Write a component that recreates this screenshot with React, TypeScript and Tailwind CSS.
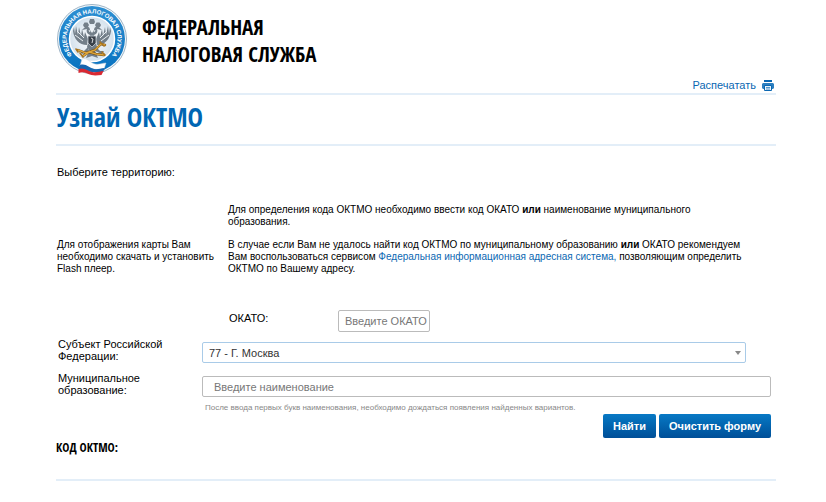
import { useState } from 'react';

const regions = [
  { code: '77', name: 'Г. Москва' },
  { code: '78', name: 'Г. Санкт-Петербург' },
  { code: '50', name: 'Московская область' },
];

const Emblem = () => (
  <svg viewBox="0 0 72 76" className="h-[76px] w-[72px] shrink-0" role="img" aria-label="ФНС">
    <defs>
      <linearGradient id="ring" x1="0" y1="0" x2="0" y2="1">
        <stop offset="0" stopColor="#2d8fd2" />
        <stop offset="1" stopColor="#0872c0" />
      </linearGradient>
      <radialGradient id="field">
        <stop offset="0" stopColor="#ffffff" />
        <stop offset="1" stopColor="#d3e1ec" />
      </radialGradient>
      <path id="arc" d="M19.600 56.500 A25.500 25.500 0 1 1 52.400 56.500" />
    </defs>
    <circle cx="36" cy="37" r="34.5" fill="#f4f8fb" stroke="#9db4c6" strokeWidth="1" />
    <circle cx="36" cy="37" r="33" fill="url(#ring)" />
    <circle cx="36" cy="37" r="22.5" fill="url(#field)" stroke="#ffffff" strokeWidth="1.5" />
    <text fontFamily="Liberation Sans, sans-serif" fontSize="6" fontWeight="700" fill="#ffffff">
      <textPath href="#arc" startOffset="50%" textAnchor="middle">ФЕДЕРАЛЬНАЯ НАЛОГОВАЯ СЛУЖБА</textPath>
    </text>
    {/* eagle */}
    <g fill="#737f89">
      <path d="M33 20l1-3h4l1 3-1 2h-4z" />
      <path d="M27 23l1.500-2.500h3L33 23l-1 2h-4zM39 23l1.500-2.500h3L45 23l-1 2h-4z" />
      <path d="M34 33c-3-1-4-4-3-6l-5 1 3-3c3-1 5 0 5 3l2 3 2-3c0-3 2-4 5-3l3 3-5-1c1 2 0 5-3 6l3 12-5 7-5-7z" />
      <path d="M31 43c-8 0-13-6-14-14l1-4 1 7 1-8 2 9 1-8 2 9 1-7 2 8 1-5 3 7z" />
      <path d="M41 43c8 0 13-6 14-14l-1-4-1 7-1-8-2 9-1-8-2 9-1-7-2 8-1-5-3 7z" />
      <path d="M32 45l-4 4-4 0 2 3 7-3zM40 45l4 4 4 0-2 3-7-3zM33 49l-3 7 6-2 6 2-3-7z" />
    </g>
    <path d="M19 33l8 6M21 29l7 7M53 33l-8 6M51 29l-7 7M33 28l1 2M39 28l-1 2" stroke="#e8eef2" strokeWidth="1" />
    <path d="M32 34h8v7l-4 4-4-4z" fill="#39414a" stroke="#c3ccd4" strokeWidth="0.8" />
    <path d="M35 36l2 1-1 4" fill="none" stroke="#ffffff" strokeWidth="0.8" />
    {/* caduceus and torch */}
    <g fill="none" strokeLinecap="round">
      <path d="M22 48l8 3 9-3 6-6 4 1M27 54l6-4 7 2 8 1" stroke="#68450f" strokeWidth="2.4" />
      <path d="M22 48l8 3 9-3 6-6 4 1M27 54l6-4 7 2 8 1" stroke="#dda53a" strokeWidth="1.6" />
      <path d="M20 47l2 3M24 51l3 4M44 40l4 4M46 50l3 3" stroke="#a87521" strokeWidth="1.6" />
    </g>
    {/* ribbon */}
    <path d="M26 57c5-2 8 4 13 5 4 1 7-1 11-1l-2 6c-4 0-6 1-10 0-5-1-8-5-14-3z" fill="#ffffff" stroke="#c8d3dc" strokeWidth="0.5" />
    <path d="M24 63c6-2 9 3 14 4 4 1 6-1 11-1l-2 4c-3 0-6 1-10 0-5-1-8-5-14-3z" fill="#1765ae" />
    <path d="M22.500 67c6-2 9 2 14 3 4 1 7-1 11-1l-2 4c-3 0-6 1-10 0-5-1-7-4-13-2z" fill="#d92932" />
  </svg>
);

const PrintIcon = () => (
  <svg viewBox="0 0 12 11" className="h-[11px] w-3" aria-hidden="true">
    <path d="M2 0h8v2H2z" fill="#0a67b2" />
    <path d="M1 3h10l1 1v4l-1 1H1L0 8V4z" fill="#2c7fc0" />
    <path d="M2.500 5.500h7v5h-7z" fill="#e9f3fa" stroke="#0a67b2" />
    <path d="M4 7.500h4M4 9h4" stroke="#2c7fc0" strokeWidth="0.8" />
  </svg>
);

const App = () => {
  const [okato, setOkato] = useState('');
  const [region, setRegion] = useState('77');
  const [municipality, setMunicipality] = useState('');

  const clearForm = () => {
    setOkato('');
    setRegion('77');
    setMunicipality('');
  };

  return (
    <div className="min-h-screen bg-white pt-0.5 pr-[50px] pl-14 font-['Liberation_Sans',Arial,sans-serif] text-[11px] leading-3 text-black">
      <header className="relative border-b-2 border-[#e3eef8] pb-[15px]">
        <div className="flex items-start gap-3.5">
          <Emblem />
          <p className="pt-3 font-['Open_Sans_Condensed','Roboto_Condensed',sans-serif] text-[21px] leading-[27px]">
            ФЕДЕРАЛЬНАЯ
            <br />
            НАЛОГОВАЯ СЛУЖБА
          </p>
        </div>
        <a href="#print" className="absolute right-0.5 bottom-0.5 flex items-center gap-1.5 text-[#0a67b2]">
          Распечатать
          <PrintIcon />
        </a>
      </header>

      <main>
        <div className="border-b-2 border-[#e3eef8] pt-1.5 pb-[11px] pl-px">
          <h1 className="font-['Open_Sans_Condensed','Roboto_Condensed',sans-serif] text-[26px] leading-8 font-bold text-[#0066b3]">
            Узнай ОКТМО
          </h1>
        </div>

        <p className="pt-5 pl-px">Выберите территорию:</p>

        <section className="flex items-center gap-1 pt-[25px] text-[10px]">
          <p className="w-[168px] shrink-0 pt-9 pl-px">
            Для отображения карты Вам необходимо скачать и установить Flash плеер.
          </p>
          <div className="max-w-[522px] flex-1">
            <p>
              Для определения кода ОКТМО необходимо ввести код ОКАТО <b>или</b> наименование муниципального образования.
            </p>
            <p className="pt-[11px]">
              В случае если Вам не удалось найти код ОКТМО по муниципальному образованию <b>или</b> ОКАТО рекомендуем Вам
              воспользоваться сервисом{' '}
              <a href="#fias" className="text-[#0a67b2]">
                Федеральная информационная адресная система,
              </a>{' '}
              позволяющим определить ОКТМО по Вашему адресу.
            </p>
          </div>
        </section>

        <form className="pt-[35px]" onSubmit={(e) => e.preventDefault()}>
          <div className="flex items-start pl-[173px]">
            <label htmlFor="okato" className="w-[109px] pt-0.5">ОКАТО:</label>
            <input
              id="okato"
              value={okato}
              onChange={(e) => setOkato(e.target.value)}
              placeholder="Введите ОКАТО"
              className="h-[22px] w-[92px] rounded-xs border border-[#bbb] pl-1.5 placeholder:text-[#777]"
            />
          </div>

          <div className="flex items-start pt-1.5">
            <label htmlFor="region" className="w-36 shrink-0 pr-8 pl-0.5">Субъект Российской Федерации:</label>
            <div className="relative mt-1 mr-[30px] ml-0.5 flex-1">
              <select
                id="region"
                value={region}
                onChange={(e) => setRegion(e.target.value)}
                className="block h-[21px] w-full appearance-none rounded-xs border border-[#a9cbe8] bg-white px-1.5 text-[#333]"
              >
                {regions.map((item) => (
                  <option key={item.code} value={item.code}>
                    {item.code} - {item.name}
                  </option>
                ))}
              </select>
              <svg viewBox="0 0 6 4" className="pointer-events-none absolute top-[9px] right-[5px] h-1 w-1.5" aria-hidden="true">
                <path d="M0 0h6L3 4z" fill="#888" />
              </svg>
            </div>
          </div>

          <div className="flex items-start pt-[9px]">
            <label htmlFor="municipality" className="w-36 shrink-0 pr-8 pl-0.5">Муниципальное образование:</label>
            <input
              id="municipality"
              value={municipality}
              onChange={(e) => setMunicipality(e.target.value)}
              placeholder="Введите наименование"
              className="mt-1 mr-[5px] ml-0.5 h-[21px] min-w-0 flex-1 rounded-xs border border-[#bbb] px-[11px] placeholder:text-[#777]"
            />
          </div>

          <p className="pt-[5px] pl-[149px] text-[8px] text-[#888]">
            После ввода первых букв наименования, необходимо дождаться появления найденных вариантов.
          </p>

          <div className="flex justify-end gap-[3px] pr-[5px] font-bold text-white">
            <button type="submit" className="h-6 rounded-xs bg-linear-to-b from-[#0879c5] to-[#004f98] px-2.5">
              Найти
            </button>
            <button type="button" onClick={clearForm} className="h-6 rounded-xs bg-linear-to-b from-[#0879c5] to-[#004f98] px-2.5">
              Очистить форму
            </button>
          </div>
        </form>

        <h2 className="border-b-2 border-[#e3eef8] pt-0.5 pb-[23px] font-['Open_Sans_Condensed','Roboto_Condensed',sans-serif] text-xs leading-4 font-bold">
          КОД ОКТМО:
        </h2>
      </main>
    </div>
  );
};

export default App;
